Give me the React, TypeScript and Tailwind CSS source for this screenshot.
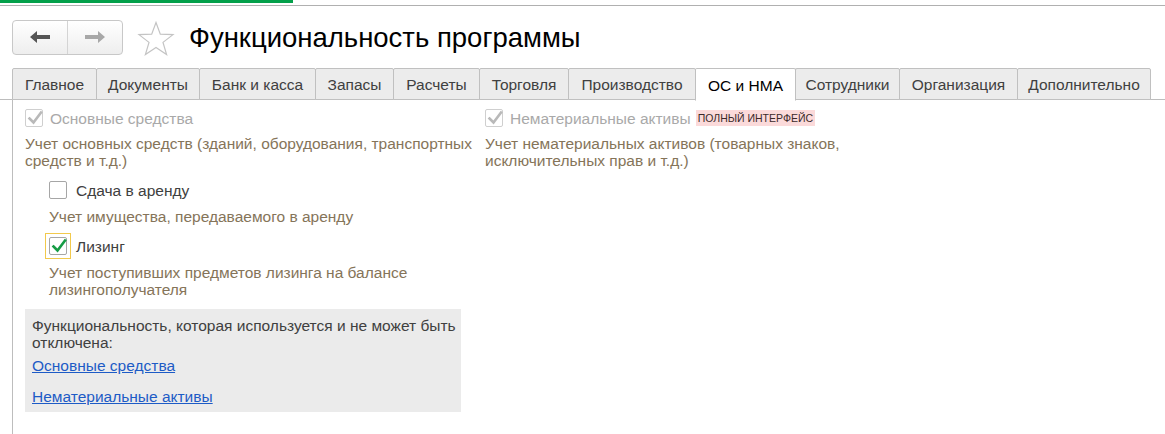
import React from "react";

const tabs = [
  "Главное",
  "Документы",
  "Банк и касса",
  "Запасы",
  "Расчеты",
  "Торговля",
  "Производство",
  "ОС и НМА",
  "Сотрудники",
  "Организация",
  "Дополнительно",
];
const tabWidths = [85, 104, 117, 79, 87, 90, 128, 101, 105, 119, 134];

function Check({ color }: { color: string }) {
  return (
    <svg width="16" height="16" viewBox="0 0 16 16" className="absolute left-[1px] top-[0px]">
      <path d="M2.5 8.5 L6.5 12.5 L14 2.5" fill="none" stroke={color} strokeWidth="2.6" strokeLinecap="square" />
    </svg>
  );
}

function Box({ checked, disabled, focus }: { checked?: boolean; disabled?: boolean; focus?: boolean }) {
  const box = (
    <div
      className={`relative w-[18px] h-[18px] rounded-[2px] border bg-white ${
        disabled ? "border-[#cfcfcf]" : "border-[#a6a6a6]"
      }`}
    >
      {checked && <Check color={disabled ? "#b9b9b9" : "#169c45"} />}
    </div>
  );
  if (focus) {
    return <div className="border border-[#f2c94c] p-[3px] -m-[4px]">{box}</div>;
  }
  return box;
}

export default function App() {
  return (
    <div
      className="w-[1165px] h-[434px] bg-white overflow-hidden text-[15.5px] leading-[17px] text-[#4d4d4d]"
      style={{ fontFamily: '"Liberation Sans", Arial, sans-serif' }}
    >
      <div className="h-[3px] w-[293px] bg-[#03a04a]" />
      <div className="mt-[2px] h-px bg-[#b0b0b0]" />

      {/* header */}
      <div className="flex items-center h-[62px] pl-[12px]">
        <div className="flex h-[35px] w-[111px] rounded-[4px] border border-[#c8c8c8] bg-gradient-to-b from-white to-[#eeeeee]">
          <div className="flex-1 flex items-center justify-center border-r border-[#d4d4d4]">
            <svg width="22" height="14" viewBox="0 0 22 14">
              <path d="M1 7 L8 1 L8 5 L21 5 L21 9 L8 9 L8 13 Z" fill="#555555" />
            </svg>
          </div>
          <div className="flex-1 flex items-center justify-center">
            <svg width="22" height="14" viewBox="0 0 22 14">
              <path d="M21 7 L14 1 L14 5 L1 5 L1 9 L14 9 L14 13 Z" fill="#a8a8a8" />
            </svg>
          </div>
        </div>
        <svg width="38" height="36" viewBox="0 0 38 36" className="ml-[14px] mt-[3px]">
          <path
            d="M19 1.5 L23.3 13.2 L36 13.6 L26 21.4 L29.6 33.6 L19 26.4 L8.4 33.6 L12 21.4 L2 13.6 L14.7 13.2 Z"
            fill="white"
            stroke="#c4c4c4"
            strokeWidth="1.2"
            strokeLinejoin="miter"
          />
        </svg>
        <div className="ml-[14px] text-[27.5px] leading-[32px] text-black mt-[1px]">Функциональность программы</div>
      </div>

      {/* tabs */}
      <div className="flex pl-[12px] h-[32px] border-b border-[#bdbdbd] relative">
        {tabs.map((t, i) => {
          const active = t === "ОС и НМА";
          return (
            <div
              key={t}
              style={{ width: tabWidths[i] }}
              className={`h-[32px] flex items-center justify-center border border-[#c0c0c0] rounded-t-[2px] -mr-px ${
                active ? "bg-white border-b-white relative z-10 text-black h-[33px]" : "bg-[#ececec] text-[#404040]"
              }`}
            >
              <span className={active ? "mt-[1px]" : ""}>{t}</span>
            </div>
          );
        })}
      </div>

      {/* content */}
      <div className="ml-[12px] border-l border-[#bdbdbd] h-[400px] pl-[12px] pt-[8px] flex">
        <div className="w-[460px]">
          <div className="flex items-center gap-[7px] h-[18px] mt-[1px]">
            <Box checked disabled />
            <span className="text-[#a9a9a9]">Основные средства</span>
          </div>
          <div className="mt-[8px] text-[#857459]">
            Учет основных средств (зданий, оборудования, транспортных средств и т.д.)
          </div>

          <div className="pl-[24px]">
            <div className="flex items-center gap-[9px] h-[18px] mt-[12px]">
              <Box />
              <span className="text-[#404040]">Сдача в аренду</span>
            </div>
            <div className="mt-[9px] text-[#857459]">Учет имущества, передаваемого в аренду</div>

            <div className="flex items-center gap-[9px] h-[18px] mt-[12px]">
              <Box checked focus />
              <span className="text-[#404040]">Лизинг</span>
            </div>
            <div className="mt-[9px] text-[#857459] w-[400px]">
              Учет поступивших предметов лизинга на балансе лизингополучателя
            </div>
          </div>

          <div className="mt-[11px] w-[436px] bg-[#ebebeb] pl-[7px] pt-[8px] pb-[7px] text-[#404040]">
            <div className="w-[429px]">Функциональность, которая используется и не может быть отключена:</div>
            <div className="mt-[6px]">
              <a className="underline text-[#1d5bc6] cursor-pointer">Основные средства</a>
            </div>
            <div className="mt-[14px]">
              <a className="underline text-[#1d5bc6] cursor-pointer">Нематериальные активы</a>
            </div>
          </div>
        </div>

        <div className="w-[380px]">
          <div className="flex items-center h-[18px] mt-[1px]">
            <Box checked disabled />
            <span className="ml-[7px] text-[#a9a9a9]">Нематериальные активы</span>
            <span className="ml-[5px] bg-[#fbdada] text-[#3a2a2a] text-[10.5px] leading-[16px] px-[2px]">
              ПОЛНЫЙ ИНТЕРФЕЙС
            </span>
          </div>
          <div className="mt-[8px] text-[#857459] w-[370px]">
            Учет нематериальных активов (товарных знаков, исключительных прав и т.д.)
          </div>
        </div>
      </div>
    </div>
  );
}
